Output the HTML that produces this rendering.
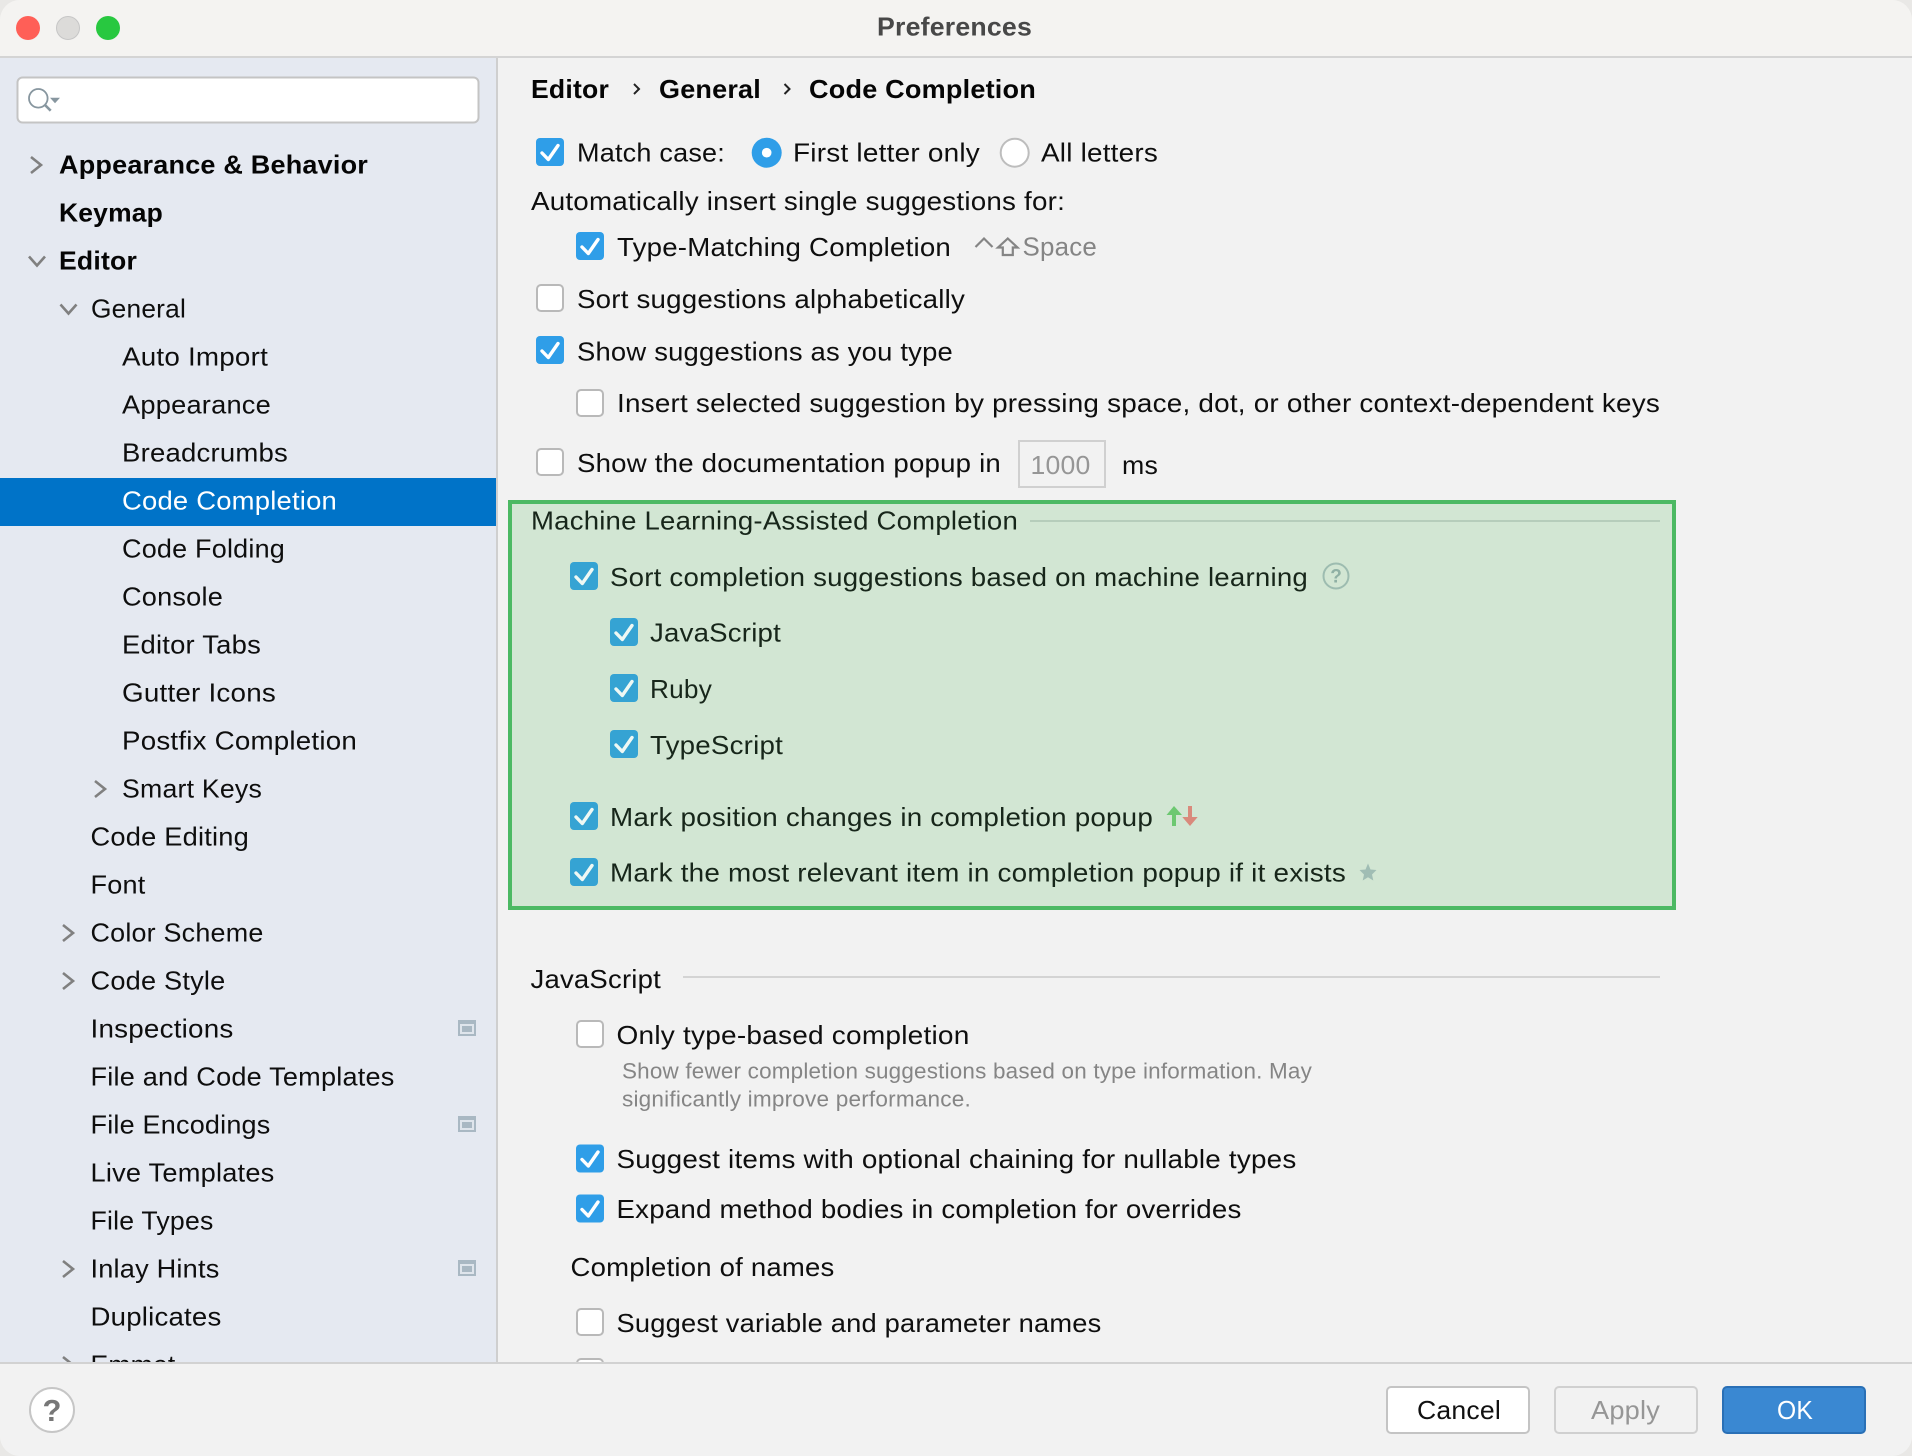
<!DOCTYPE html>
<html lang="en"><head><meta charset="utf-8"><title>Preferences</title>
<style>
html,body{margin:0;padding:0;background:#e9e8e6;width:1912px;height:1456px;overflow:hidden}
svg{display:block}
text{font-family:"Liberation Sans",sans-serif;font-size:26px;fill:#0e0e0e;letter-spacing:.2px}
.b{font-weight:700;fill:#050505}
.g{fill:#969696}
.m{fill:#17261a}
.s{font-size:22.5px;fill:#858585}
.c{fill:none;stroke:#808080;stroke-width:2.6}
</style></head><body>
<svg width="1912" height="1456" viewBox="0 0 1912 1456" xmlns="http://www.w3.org/2000/svg">
<defs>
<clipPath id="w"><rect width="1912" height="1456" rx="20"/></clipPath>
<g id="on"><rect width="28" height="28" rx="4" fill="#2f9ee8"/><path d="M6 15L12.300 21.500L22 7.500" fill="none" stroke="#fff" stroke-width="3.4" stroke-linecap="round" stroke-linejoin="round"/></g>
<g id="onm"><rect width="28" height="28" rx="4" fill="#35a3d3"/><path d="M6 15L12.300 21.500L22 7.500" fill="none" stroke="#eef8f4" stroke-width="3.4" stroke-linecap="round" stroke-linejoin="round"/></g>
<g id="off"><rect x="1" y="1" width="26" height="26" rx="4" fill="#fff" stroke="#b9b9b9" stroke-width="2"/></g>
<path id="cr" d="M-5 -8L5 0L-5 8" class="c"/>
<path id="cd" d="M-8 -4.500L0 4.500L8 -4.500" class="c"/>
<g id="ic"><rect width="18" height="16" fill="#a9b8c3"/><rect x="2" y="4" width="14" height="10" fill="#dfe5ec"/><rect x="4" y="6" width="10" height="6" fill="#a9b8c3"/></g>
</defs>
<g clip-path="url(#w)">
<rect width="1912" height="1456" fill="#f2f2f2"/>
<!-- title bar -->
<rect width="1912" height="56" fill="#f4f3f1"/>
<rect y="56" width="1912" height="2" fill="#d4d4d4"/>
<circle cx="28" cy="28" r="12" fill="#ff5f57"/>
<circle cx="68" cy="28" r="11.500" fill="#dcdbd9" stroke="#c6c6c6"/>
<circle cx="108" cy="28" r="12" fill="#28c840"/>
<text x="877" y="35.500" textLength="155" lengthAdjust="spacingAndGlyphs" style="font-weight:700;fill:#484848">Preferences</text>
<!-- sidebar -->
<rect y="58" width="496" height="1306" fill="#e5e9f1"/>
<rect x="496" y="58" width="2" height="1306" fill="#cfcfcf"/>
<rect x="17.500" y="77.500" width="461" height="45" rx="5" fill="#fff" stroke="#c4c4c4" stroke-width="2"/>
<circle cx="38.300" cy="98.300" r="9.300" fill="none" stroke="#87969f" stroke-width="1.800"/>
<path d="M45 105L50.700 110.700" stroke="#87969f" stroke-width="2.600" fill="none"/>
<path d="M50 97.700H60L55 103.300Z" fill="#87969f"/>
<rect y="478" width="496" height="48" fill="#0073c8"/>
<use href="#cr" x="36" y="165"/>
<use href="#cd" x="37" y="261"/>
<use href="#cd" x="68.500" y="309"/>
<use href="#cr" x="100" y="789"/>
<use href="#cr" x="68" y="933"/>
<use href="#cr" x="68" y="981"/>
<use href="#cr" x="68" y="1269"/>
<use href="#cr" x="68" y="1365"/>
<text class="b" x="59" y="173.500" textLength="309" lengthAdjust="spacingAndGlyphs">Appearance &amp; Behavior</text>
<text class="b" x="59" y="221.500" textLength="104" lengthAdjust="spacingAndGlyphs">Keymap</text>
<text class="b" x="59" y="269.500" textLength="78" lengthAdjust="spacingAndGlyphs">Editor</text>
<text x="91" y="317.500" textLength="95" lengthAdjust="spacingAndGlyphs">General</text>
<text x="122" y="365.500" textLength="146" lengthAdjust="spacingAndGlyphs">Auto Import</text>
<text x="122" y="413.500" textLength="149" lengthAdjust="spacingAndGlyphs">Appearance</text>
<text x="122" y="461.500" textLength="166" lengthAdjust="spacingAndGlyphs">Breadcrumbs</text>
<text x="122" y="509.500" textLength="215" lengthAdjust="spacingAndGlyphs" style="fill:#fff">Code Completion</text>
<text x="122" y="557.500" textLength="163" lengthAdjust="spacingAndGlyphs">Code Folding</text>
<text x="122" y="605.500" textLength="101" lengthAdjust="spacingAndGlyphs">Console</text>
<text x="122" y="653.500" textLength="139" lengthAdjust="spacingAndGlyphs">Editor Tabs</text>
<text x="122" y="701.500" textLength="154" lengthAdjust="spacingAndGlyphs">Gutter Icons</text>
<text x="122" y="749.500" textLength="235" lengthAdjust="spacingAndGlyphs">Postfix Completion</text>
<text x="122" y="797.500" textLength="140" lengthAdjust="spacingAndGlyphs">Smart Keys</text>
<text x="90.500" y="845.500" textLength="158.500" lengthAdjust="spacingAndGlyphs">Code Editing</text>
<text x="90.500" y="893.500" textLength="55" lengthAdjust="spacingAndGlyphs">Font</text>
<text x="90.500" y="941.500" textLength="173" lengthAdjust="spacingAndGlyphs">Color Scheme</text>
<text x="90.500" y="989.500" textLength="135" lengthAdjust="spacingAndGlyphs">Code Style</text>
<text x="90.500" y="1037.500" textLength="143" lengthAdjust="spacingAndGlyphs">Inspections</text>
<text x="90.500" y="1085.500" textLength="304" lengthAdjust="spacingAndGlyphs">File and Code Templates</text>
<text x="90.500" y="1133.500" textLength="180" lengthAdjust="spacingAndGlyphs">File Encodings</text>
<text x="90.500" y="1181.500" textLength="184" lengthAdjust="spacingAndGlyphs">Live Templates</text>
<text x="90.500" y="1229.500" textLength="123" lengthAdjust="spacingAndGlyphs">File Types</text>
<text x="90.500" y="1277.500" textLength="129" lengthAdjust="spacingAndGlyphs">Inlay Hints</text>
<text x="90.500" y="1325.500" textLength="131" lengthAdjust="spacingAndGlyphs">Duplicates</text>
<text x="90.500" y="1373.500" textLength="85" lengthAdjust="spacingAndGlyphs">Emmet</text>
<use href="#ic" x="458" y="1020"/>
<use href="#ic" x="458" y="1116"/>
<use href="#ic" x="458" y="1260"/>
<!-- breadcrumb -->
<text class="b" x="531" y="98" textLength="78" lengthAdjust="spacingAndGlyphs">Editor</text>
<path d="M634 84L639 89L634 94" fill="none" stroke="#222" stroke-width="2"/>
<text class="b" x="659" y="98" textLength="102" lengthAdjust="spacingAndGlyphs">General</text>
<path d="M784.500 84L789.500 89L784.500 94" fill="none" stroke="#222" stroke-width="2"/>
<text class="b" x="809" y="98" textLength="227" lengthAdjust="spacingAndGlyphs">Code Completion</text>
<!-- top options -->
<use href="#on" x="536" y="138"/>
<text x="577" y="161.500" textLength="148" lengthAdjust="spacingAndGlyphs">Match case:</text>
<circle cx="766.700" cy="152.700" r="15" fill="#2f9ee8"/><circle cx="766.700" cy="152.700" r="4.800" fill="#fff"/>
<text x="793" y="161.500" textLength="187" lengthAdjust="spacingAndGlyphs">First letter only</text>
<circle cx="1014.700" cy="152.700" r="14" fill="#fff" stroke="#bdbdbd" stroke-width="2"/>
<text x="1041" y="161.500" textLength="117" lengthAdjust="spacingAndGlyphs">All letters</text>
<text x="531" y="210" textLength="534" lengthAdjust="spacingAndGlyphs">Automatically insert single suggestions for:</text>
<use href="#on" x="576" y="232"/>
<text x="617" y="256" textLength="334" lengthAdjust="spacingAndGlyphs">Type-Matching Completion</text>
<path d="M975.500 247L984 238.500L992.500 247" fill="none" stroke="#858585" stroke-width="2.200"/>
<path d="M1007.800 238.500L1017.500 247.500H1012.800V255H1002.800V247.500H998Z" fill="none" stroke="#858585" stroke-width="2.200"/>
<text x="1022.500" y="255.500" textLength="74.500" lengthAdjust="spacingAndGlyphs" style="fill:#858585">Space</text>
<use href="#off" x="536" y="284"/>
<text x="577" y="308" textLength="388" lengthAdjust="spacingAndGlyphs">Sort suggestions alphabetically</text>
<use href="#on" x="536" y="336"/>
<text x="577" y="360.500" textLength="376" lengthAdjust="spacingAndGlyphs">Show suggestions as you type</text>
<use href="#off" x="576" y="389"/>
<text x="617" y="412" textLength="1043" lengthAdjust="spacingAndGlyphs">Insert selected suggestion by pressing space, dot, or other context-dependent keys</text>
<use href="#off" x="536" y="448"/>
<text x="577" y="472" textLength="424" lengthAdjust="spacingAndGlyphs">Show the documentation popup in</text>
<rect x="1019" y="441" width="86" height="46" fill="#f2f2f2" stroke="#d0d0d0" stroke-width="2"/>
<text class="g" x="1030.500" y="474" textLength="60" lengthAdjust="spacingAndGlyphs">1000</text>
<text x="1122" y="474" textLength="36" lengthAdjust="spacingAndGlyphs">ms</text>
<!-- ML box -->
<rect x="510" y="502" width="1164" height="406" fill="#d2e6d3" stroke="#4cb963" stroke-width="4"/>
<text class="m" x="531" y="529.300" textLength="487" lengthAdjust="spacingAndGlyphs">Machine Learning-Assisted Completion</text>
<rect x="1030" y="520" width="630" height="2" fill="#b6cdbb"/>
<use href="#onm" x="570" y="562"/>
<text class="m" x="610" y="586" textLength="698" lengthAdjust="spacingAndGlyphs">Sort completion suggestions based on machine learning</text>
<circle cx="1336" cy="576" r="12.500" fill="none" stroke="#9dbcb0" stroke-width="2"/>
<text x="1336" y="582.500" text-anchor="middle" style="font-size:19px;font-weight:700;fill:#8fb0a4;letter-spacing:0">?</text>
<use href="#onm" x="610" y="618"/>
<text class="m" x="650" y="641.500" textLength="131" lengthAdjust="spacingAndGlyphs">JavaScript</text>
<use href="#onm" x="610" y="674"/>
<text class="m" x="650" y="698" textLength="62" lengthAdjust="spacingAndGlyphs">Ruby</text>
<use href="#onm" x="610" y="730"/>
<text class="m" x="650" y="754" textLength="133" lengthAdjust="spacingAndGlyphs">TypeScript</text>
<use href="#onm" x="570" y="802"/>
<text class="m" x="610" y="826" textLength="543" lengthAdjust="spacingAndGlyphs">Mark position changes in completion popup</text>
<path d="M1174 806L1182 815H1176V826H1172V815H1166.500Z" fill="#6dc871"/>
<path d="M1188 806H1192V817H1197.700L1190 826L1182.300 817H1188Z" fill="#d98a7c"/>
<use href="#onm" x="570" y="858"/>
<text class="m" x="610" y="881.500" textLength="736" lengthAdjust="spacingAndGlyphs">Mark the most relevant item in completion popup if it exists</text>
<path d="M1368 863.500L1370.500 869.500L1376.500 870L1372 874.500L1373.300 880.500L1368 877.300L1362.700 880.500L1364 874.500L1359.500 870L1365.500 869.500Z" fill="#a0bdb4"/>
<!-- JavaScript section -->
<text x="530.500" y="988" textLength="130.500" lengthAdjust="spacingAndGlyphs">JavaScript</text>
<rect x="683" y="976" width="977" height="2" fill="#d4d4d4"/>
<use href="#off" x="576" y="1020"/>
<text x="616.500" y="1044" textLength="353" lengthAdjust="spacingAndGlyphs">Only type-based completion</text>
<text class="s" x="622" y="1078.500" textLength="690" lengthAdjust="spacingAndGlyphs">Show fewer completion suggestions based on type information. May</text>
<text class="s" x="622" y="1106.500" textLength="349" lengthAdjust="spacingAndGlyphs">significantly improve performance.</text>
<use href="#on" x="576" y="1144.500"/>
<text x="616.500" y="1168" textLength="680" lengthAdjust="spacingAndGlyphs">Suggest items with optional chaining for nullable types</text>
<use href="#on" x="576" y="1194.500"/>
<text x="616.500" y="1218" textLength="625" lengthAdjust="spacingAndGlyphs">Expand method bodies in completion for overrides</text>
<text x="570.500" y="1276" textLength="264" lengthAdjust="spacingAndGlyphs">Completion of names</text>
<use href="#off" x="576" y="1308"/>
<text x="616.500" y="1332" textLength="485" lengthAdjust="spacingAndGlyphs">Suggest variable and parameter names</text>
<use href="#off" x="576" y="1358"/>
<!-- bottom bar -->
<rect y="1362" width="1912" height="94" fill="#f2f2f2"/>
<rect y="1362" width="1912" height="2" fill="#d2d2d2"/>
<circle cx="52" cy="1410" r="22" fill="#fff" stroke="#c6c6c6" stroke-width="2"/>
<text x="52" y="1421" text-anchor="middle" style="font-size:31px;font-weight:700;fill:#777;letter-spacing:0">?</text>
<rect x="1387" y="1387" width="142" height="46" rx="4" fill="#fff" stroke="#c4c4c4" stroke-width="2"/>
<text x="1417" y="1419" textLength="84" lengthAdjust="spacingAndGlyphs" style="fill:#111">Cancel</text>
<rect x="1555" y="1387" width="142" height="46" rx="4" fill="#f2f2f2" stroke="#d0d0d0" stroke-width="2"/>
<text class="g" x="1591" y="1419" textLength="69" lengthAdjust="spacingAndGlyphs">Apply</text>
<rect x="1723" y="1387" width="142" height="46" rx="4" fill="#3a88d2" stroke="#2a70b6" stroke-width="2"/>
<text x="1777" y="1419" textLength="36" lengthAdjust="spacingAndGlyphs" style="fill:#fff">OK</text>
</g>
</svg>
</body></html>
